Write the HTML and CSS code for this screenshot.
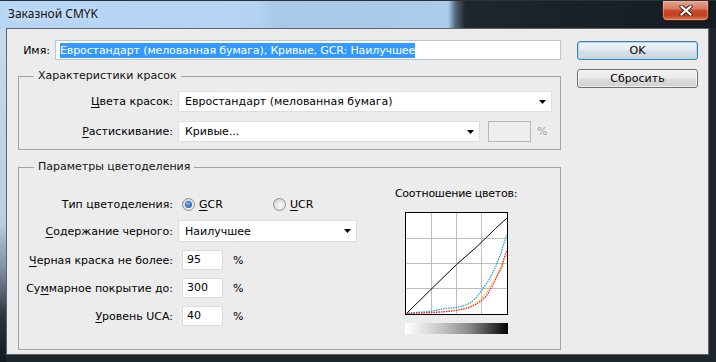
FILE: index.html
```html
<!DOCTYPE html>
<html lang="ru">
<head>
<meta charset="utf-8">
<title>Заказной CMYK</title>
<link rel="stylesheet" href="styles.css">
</head>
<body>
<div class="window">
  <div class="titlebar">
    <span class="title">Заказной CMYK</span>
    <div class="close">
      <svg width="14" height="11" viewBox="0 0 14 11">
        <path d="M2.5 1.5 L11.5 9.5 M11.5 1.5 L2.5 9.5" stroke="#3b2a26" stroke-width="4.2" stroke-linecap="round"/>
        <path d="M2.5 1.5 L11.5 9.5 M11.5 1.5 L2.5 9.5" stroke="#ffffff" stroke-width="2.3" stroke-linecap="round"/>
      </svg>
    </div>
  </div>
  <div class="frame">
    <div class="client">
      <div class="main">
        <div class="name-row">
          <label class="name-label">Имя:</label>
          <div class="textbox name-box"><span class="sel">Евростандарт (мелованная бумага), Кривые, GCR: Наилучшее</span></div>
        </div>

        <fieldset class="group group-inks">
          <legend>Характеристики красок</legend>
          <div class="grid grid-inks">
            <label class="lbl"><u>Ц</u>вета красок:</label>
            <div class="combo combo-colors"><span>Евростандарт (мелованная бумага)</span><svg class="arrow" width="7" height="4" viewBox="0 0 7 4"><path d="M0 0 H7 L3.5 4 Z" fill="#000"/></svg></div>
            <label class="lbl"><u>Р</u>астискивание:</label>
            <div class="ctrl-row">
              <div class="combo combo-gain"><span>Кривые...</span><svg class="arrow" width="7" height="4" viewBox="0 0 7 4"><path d="M0 0 H7 L3.5 4 Z" fill="#000"/></svg></div>
              <div class="textbox small-box disabled"></div>
              <span class="pct dim">%</span>
            </div>
          </div>
        </fieldset>

        <fieldset class="group group-sep">
          <legend>Параметры цветоделения</legend>
          <div class="sep-body">
            <div class="grid grid-sep">
              <label class="lbl">Тип цветоделения:</label>
              <div class="radios">
                <span class="opt opt-first"><span class="radio checked"><span class="dot"></span></span><span><u>G</u>CR</span></span>
                <span class="opt"><span class="radio"></span><span><u>U</u>CR</span></span>
              </div>

              <label class="lbl"><u>С</u>одержание черного:</label>
              <div class="combo combo-black"><span>Наилучшее</span><svg class="arrow" width="7" height="4" viewBox="0 0 7 4"><path d="M0 0 H7 L3.5 4 Z" fill="#000"/></svg></div>

              <label class="lbl"><u>Ч</u>ерная краска не более:</label>
              <div class="ctrl-row"><div class="textbox num-box">95</div><span class="pct">%</span></div>

              <label class="lbl">Су<u>м</u>марное покрытие до:</label>
              <div class="ctrl-row"><div class="textbox num-box">300</div><span class="pct">%</span></div>

              <label class="lbl"><u>У</u>ровень UCA:</label>
              <div class="ctrl-row"><div class="textbox num-box">40</div><span class="pct">%</span></div>
            </div>

            <div class="chart">
              <div class="chart-title">Соотношение цветов:</div>
              <svg class="graph" width="103" height="103" viewBox="0 0 103 103">
                <rect x="0" y="0" width="103" height="103" fill="#ffffff"/>
                <g stroke="#bdbdbd" stroke-width="1">
                  <path d="M26.5 1 V102 M51.5 1 V102 M76.5 1 V102 M1 26.5 H102 M1 51.5 H102 M1 76.5 H102"/>
                </g>
                <polyline fill="none" stroke="#000" stroke-width="1" points="1,102 31,72.5 51.5,52.5 71,35.5 90.5,16.5 102,6"/>
                <polyline fill="none" stroke="#ffcc00" stroke-width="1.2" stroke-dasharray="1.5 1" points="1,101.5 20,101 40,99.5 55,97.5 63,95 70,91.5 77,86 84,77 90,67 95,57 99,48 102,43"/>
                <polyline fill="none" stroke="#00a0d6" stroke-width="1.2" stroke-dasharray="1.5 1" points="1,101.5 11,100.5 24,99.5 41,96.5 52,95.5 61,93 66,90.5 71,86 77,78 84,68 91,54 96,41 99,31 102,23"/>
                <polyline fill="none" stroke="#ee1166" stroke-width="1.2" stroke-dasharray="1.5 1" points="1,101.5 14,101 37,100 51,98.5 61,96.5 67,94.5 74,90.5 81,84.5 87,74.5 92,64.5 97,54.5 99,46 102,38"/>
                <rect x="0.5" y="0.5" width="102" height="102" fill="none" stroke="#000" stroke-width="1"/>
              </svg>
              <div class="ramp"></div>
            </div>
          </div>
        </fieldset>
      </div>

      <div class="buttons">
        <button class="btn btn-default" type="button">OK</button>
        <button class="btn" type="button">Сбросить</button>
      </div>
    </div>
  </div>
</div>
</body>
</html>
```

FILE: styles.css
```css
* { box-sizing: border-box; }

html, body {
  margin: 0;
  padding: 0;
}

body {
  width: 716px;
  height: 362px;
  overflow: hidden;
  background: #1c242c;
  font-family: "DejaVu Sans", "Liberation Sans", sans-serif;
  font-size: 11px;
  color: #000;
}

.window {
  width: 716px;
  height: 362px;
  display: flex;
  flex-direction: column;
  background: #1c242c;
}

/* ---------- title bar ---------- */
.titlebar {
  flex: none;
  height: 28px;
  display: flex;
  align-items: flex-start;
  border-top: 1px solid #2b323a;
  background: linear-gradient(to right,
    #b7d6f5 0%, #b4d3f3 36%, #a9c9e9 38.5%, #abcbea 62.6%,
    #56677a 63.6%, #1e262e 65%, #151b22 100%);
}

.title {
  margin: 5px 0 0 8px;
  font-family: "Noto Sans", "Open Sans", sans-serif;
  font-size: 12px;
  line-height: 16px;
  color: #111;
  text-shadow: 0 0 6px rgba(255, 255, 255, 0.7);
}

.close {
  margin-left: auto;
  margin-right: 7px;
  width: 47px;
  height: 20px;
  display: flex;
  align-items: center;
  justify-content: center;
  border: 1px solid #47201a;
  border-top: none;
  border-radius: 0 0 5px 5px;
  background: linear-gradient(to bottom,
    #e4a594 0%, #d77a63 40%, #c7472b 52%, #c4401f 75%, #dc7a55 100%);
  box-shadow: inset 0 0 0 1px rgba(255, 200, 180, 0.45);
}

/* ---------- frame & client ---------- */
.frame {
  flex: 1;
  display: flex;
  padding: 0 7px 7px 6px;
  background:
    linear-gradient(to bottom, #c7d9ec 0%, #bccee1 58%, #7d8b99 73%, #2c343c 86%, #141a1f 100%) left top / 6px 100% no-repeat,
    #1c242c;
}

.client {
  flex: 1;
  display: flex;
  gap: 16px;
  padding: 11px 10px 0 11px;
  background: #ececec;
  border: 1px solid #5a646e;
}

.main {
  flex: 1;
  display: flex;
  flex-direction: column;
}

/* ---------- name ---------- */
.name-row {
  display: flex;
  align-items: center;
  height: 20px;
}

.name-label {
  width: 37px;
  padding-right: 5px;
  text-align: right;
  white-space: nowrap;
}

.textbox {
  background: #fff;
  border: 1px solid #dcdcdc;
  height: 20px;
  line-height: 18px;
  padding: 0 4px;
  white-space: nowrap;
  overflow: hidden;
}

.name-box {
  flex: 1;
  border-color: #b9c6d3;
  display: flex;
  align-items: center;
}

.sel {
  background: #3399ff;
  color: #fff;
  line-height: 15px;
  letter-spacing: -0.12px;
  display: inline-block;
}

/* ---------- group boxes ---------- */
.group {
  margin: 0;
  border: 1px solid #a3a3a3;
  min-width: 0;
}

.group legend {
  margin-left: 15px;
  padding: 0 4px;
  line-height: 14px;
  color: #111;
}

.group-inks {
  margin-top: 9px;
  padding: 8px 0 7px 0;
}

.group-sep {
  margin-top: 10px;
  padding: 13px 0 15px 0;
}

.grid {
  display: grid;
  grid-template-columns: 154px auto;
  column-gap: 5px;
  justify-content: start;
}

.grid-inks {
  grid-template-rows: 21px 21px;
  row-gap: 9px;
}

.lbl {
  align-self: center;
  text-align: right;
  white-space: nowrap;
}

u {
  text-underline-offset: 2px;
}

.ctrl-row {
  display: flex;
  align-items: center;
}

.combo {
  display: flex;
  align-items: center;
  height: 21px;
  padding: 0 5px 0 6px;
  background: #fff;
  border: 1px solid #dedede;
  white-space: nowrap;
}

.combo .arrow {
  margin-left: auto;
  flex: none;
}

.combo-colors { width: 374px; }
.combo-gain { width: 302px; }
.combo-black { width: 179px; height: 22px; }

.small-box {
  width: 43px;
  height: 21px;
  margin-left: 8px;
}

.disabled {
  background: #eeeeee;
  border-color: #b7b7b7;
}

.pct {
  margin-left: 10px;
}

.dim {
  margin-left: 6px;
  color: #a0a0a0;
}

/* ---------- separation ---------- */
.sep-body {
  display: flex;
  align-items: flex-start;
}

.grid-sep {
  margin-top: 9px;
  grid-template-rows: 16px 22px 20px 20px 20px;
  row-gap: 8px;
}

.radios {
  display: flex;
  align-items: center;
  padding-left: 4px;
}

.opt {
  display: inline-flex;
  align-items: center;
  gap: 4px;
}

.opt-first {
  width: 91px;
}

.radio {
  width: 13px;
  height: 13px;
  border-radius: 50%;
  border: 1px solid #8e8f8f;
  background: radial-gradient(circle at 60% 65%, #f6f6f6 0%, #e2e2e2 55%, #c8c8c8 100%);
  display: flex;
  align-items: center;
  justify-content: center;
}

.radio .dot {
  width: 5px;
  height: 5px;
  border-radius: 50%;
  background: radial-gradient(circle at 40% 35%, #8cc4f4 0%, #2f73c4 60%, #1c4f93 100%);
  box-shadow: 0 0 0 1px #3b6fa8;
}

.num-box {
  width: 41px;
  margin-left: 4px;
  padding-left: 4px;
}

/* ---------- chart ---------- */
.chart {
  margin-left: 38px;
  width: 122px;
  display: flex;
  flex-direction: column;
  align-items: center;
}

.chart-title {
  line-height: 14px;
  letter-spacing: -0.25px;
  white-space: nowrap;
}

.graph {
  display: block;
  margin-top: 11px;
  margin-left: 1px;
}

.ramp {
  margin-top: 8px;
  margin-left: 1px;
  width: 103px;
  height: 11px;
  background: linear-gradient(to right, #ffffff 0%, #f4f4f4 8%, #c6c6c6 35%, #8a8a8a 62%, #3a3a3a 85%, #000000 100%);
}

/* ---------- buttons ---------- */
.buttons {
  width: 121px;
  flex: none;
  display: flex;
  flex-direction: column;
}

.btn {
  width: 121px;
  height: 19px;
  padding: 0;
  font-family: inherit;
  font-size: 11px;
  color: #000;
  border: 1px solid #707070;
  border-radius: 3px;
  background: linear-gradient(to bottom, #f2f2f2 0%, #ebebeb 48%, #dddddd 52%, #cfcfcf 100%);
  box-shadow: inset 0 0 0 1px rgba(255, 255, 255, 0.7);
}

.btn-default {
  margin-top: 1px;
  border-color: #3c7fb1;
  background: linear-gradient(to bottom, #eef4f8 0%, #e3ebf1 48%, #d6dfe6 52%, #cad6de 100%);
  box-shadow: inset 0 0 0 1px #a8dcf6;
}

.btn + .btn {
  margin-top: 9px;
}
```
